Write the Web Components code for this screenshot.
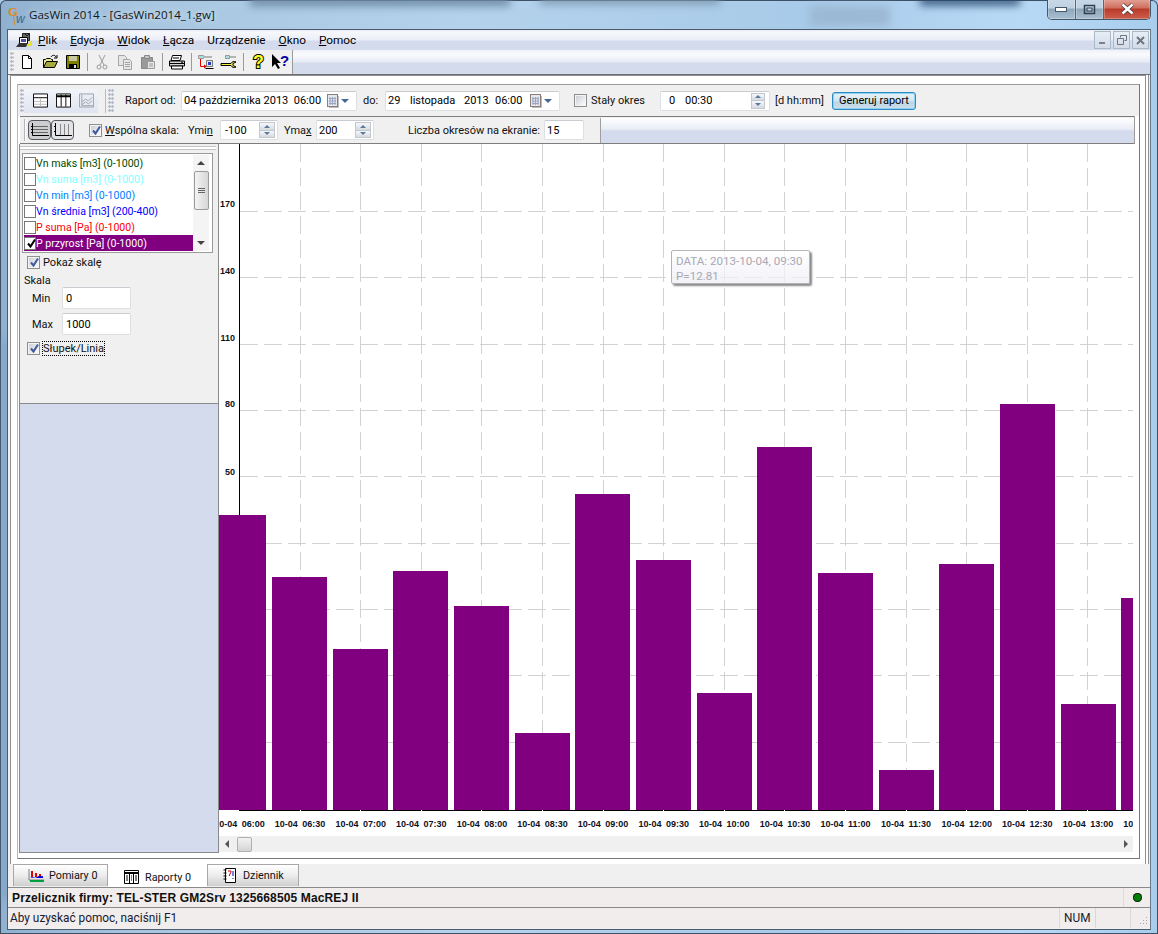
<!doctype html>
<html lang="pl">
<head>
<meta charset="utf-8">
<title>GasWin 2014</title>
<style>
  html, body { margin: 0; height: 100%; overflow: hidden; background: #a9cbe8; }
  body { font: 11px Roboto, "Liberation Sans", Arial, sans-serif; color: #111; }
</style>
</head>
<body>
<gw-window></gw-window>
<script>
// small helper, most elements here are only markup + styles
const plain = (name, css, html) => customElements.define(name, class extends HTMLElement {
  constructor() {
    super();
    this.attachShadow({ mode: "open" }).innerHTML = `<style>${css}</style>${html}`;
  }
});

const ICONS = {
  newfile: `<path d="M3.500 1.500h6l3 3v10h-9z" fill="#fff" stroke="#000"/><path d="M9.500 1.500v3h3" fill="none" stroke="#000"/>`,
  open: `<path d="M1.500 13.500v-8h2l1-1h4l1 1h1v2" fill="#e8e8a0" stroke="#000"/><path d="M1.500 13.500l3-6h11l-3 6z" fill="#a8a840" stroke="#000"/><path d="M9 3c1-2 4-2.500 5 0" fill="none" stroke="#000"/><path d="M15 1v3h-3" fill="none" stroke="#000"/>`,
  save: `<path d="M1.500 1.500h13v13h-13z" fill="#808000" stroke="#000"/><path d="M4 2h8v5h-8z" fill="#c8c8a0"/><path d="M4 10h8v5h-8z" fill="#000"/><path d="M9 11h2v3h-2z" fill="#ddd"/>`,
  cut: `<g fill="none" stroke="#9a9a9a"><path d="M5 1l5 10M11 1l-5 10"/><circle cx="5" cy="13" r="2"/><circle cx="11" cy="13" r="2"/></g>`,
  copy: `<g stroke="#a5a5a5" fill="#e6e6e6"><path d="M1.500 1.500h6l2 2v8h-8z"/><path d="M6.500 5.500h6l2 2v8h-8z"/></g><path d="M8 8.500h5M8 10.500h5M8 12.500h5" stroke="#a5a5a5"/>`,
  paste: `<path d="M1.500 3.500h11v11h-11z" fill="#9a9a9a" stroke="#888"/><path d="M4.500 1.500h5v3h-5z" fill="#c4c4c4" stroke="#888"/><path d="M7.500 7.500h7v7h-7z" fill="#e8e8e8" stroke="#999"/><path d="M9 10h4M9 12h4" stroke="#999"/>`,
  print: `<path d="M4.500 1.500h9l-1.500 5h-9z" fill="#fff" stroke="#000"/><path d="M1.500 7h15v5h-15z" fill="#d8d8d8" stroke="#000"/><path d="M2 9.500h14" stroke="#000"/><path d="M3.500 12h11v3h-11z" fill="#fff" stroke="#000"/><path d="M5 4h6M13 8.200h2" stroke="#000"/>`,
  link: `<path d="M1.500 1.500h5v3h-5z" fill="#a8e0e0" stroke="#999"/><path d="M6 3h9" stroke="#b4b4b4" stroke-width="2"/><path d="M3.500 5v7.500h4" fill="none" stroke="#e00000"/><path d="M7 10.500l3 2-3 2z" fill="#e00000"/><path d="M9.500 6.500h6v6h-6z" fill="#e4e4f0" stroke="#777"/><path d="M11 8h3v3h-3z" fill="#2040c0"/><path d="M8.500 14.500h8" stroke="#000"/>`,
  wrench: `<path d="M5.500 1.500h4v3h-4z" fill="#a8e0e0" stroke="#999"/><path d="M10 3h6" stroke="#b4b4b4" stroke-width="2"/><path d="M1 9.500h10c1-2 3-2.500 5-1.500l-3 1.500v2l3 1.500c-2 1-4 .5-5-1.500h-10z" fill="#f8f040" stroke="#000"/>`,
};
const icon = (name, w = 16, h = 16) =>
  `<svg width="${w}" height="${h}" viewBox="0 0 ${w > 16 ? 18 : 16} 16" aria-hidden="true">${ICONS[name]}</svg>`;

plain("gw-check", `
  :host { display: inline-flex; align-items: center; }
  i { display: block; box-sizing: border-box; width: 13px; height: 13px; border: 1px solid #8e8f8f; background: linear-gradient(135deg,#c8cbd2,#eef0f4 70%,#fff); box-shadow: inset 0 0 0 1px #f4f4f4; position: relative; }
  :host([list]) i { width: 12px; background: #fff; border-color: #777; box-shadow: none; }
  svg { position: absolute; left: 1px; top: 0; display: none; }
  :host([checked]) svg { display: block; }
  :host([checked]) path { stroke: #41599a; }
  :host([ink]) path { stroke: #000; }
`, `<i><svg width="11" height="11" viewBox="0 0 11 11"><path d="M2 5.500l2.500 3L9 1.500" fill="none" stroke-width="2"/></svg></i>`);

plain("gw-spinners", `
  :host { display: flex; flex-direction: column; width: 14px; height: 16px; border: 1px solid #c4c8ce; box-sizing: border-box; }
  b { flex: 1; background: linear-gradient(#f6f7f9,#d6dbe2); display: flex; align-items: center; justify-content: center; }
  b + b { border-top: 1px solid #c4c8ce; }
  i { width: 0; height: 0; border: 3px solid transparent; }
  b:first-of-type i { border-bottom: 3px solid #5878a0; border-top: 0; }
  b:last-of-type i { border-top: 3px solid #5878a0; border-bottom: 0; }
`, `<b><i></i></b><b><i></i></b>`);

plain("gw-field", `
  :host { display: flex; align-items: center; box-sizing: border-box; height: 20px; background: #fff; border: 1px solid #dcdfe3; border-top-color: #c9ccd1; border-radius: 2px; padding: 0 2px; white-space: pre; color: #000; }
  ::slotted(gw-spinners) { margin-left: auto; }
`, `<slot></slot>`);

plain("gw-calendar", `
  :host { display: flex; align-items: center; margin-left: auto; margin-right: 5px; }
  i { width: 0; height: 0; border: 4px solid transparent; border-top: 4px solid #44689a; border-bottom: 0; margin-left: 2px; }
`, `<svg width="12" height="14" viewBox="0 0 12 14" aria-hidden="true"><rect x=".5" y=".5" width="10" height="12" fill="#e4e7ee" stroke="#8c7f7a"/><path d="M3 3v8M5.500 3v8M8 3v8M2 4.500h7M2 7h7M2 9.500h7" stroke="#9aa5c0"/><path d="M11.500 2v11.500H2" stroke="#bbb" fill="none"/></svg><i></i>`);

plain("gw-grip", `
  :host { display: block; width: 4px; height: 24px; background-image: radial-gradient(circle at 1.500px 1.500px,#b4bccb 1.200px,transparent 1.500px); background-size: 3px 4px; }
`, ``);

plain("gw-title", `
  :host { display: flex; align-items: center; height: 29px; box-sizing: border-box; padding: 0 7px 0 8px; font: 11.600px "Open Sans", "Noto Sans", sans-serif; color: #101820; }
  span { text-shadow: 0 0 6px #e4f0fa; }
  .btns { margin-left: auto; display: flex; align-self: flex-start; height: 20px; margin-top: -1px; border: 1px solid #44586c; border-top: 0; border-radius: 0 0 5px 5px; overflow: hidden; background: #aebfd0; }
  .btns b { display: flex; align-items: center; justify-content: center; width: 27px; background: linear-gradient(#c8d8e8,#bfd2e3 45%,#8ea6bb 50%,#a9c0d2); border-right: 1px solid #55687a; box-shadow: inset 0 0 0 1px #ffffff40; }
  .btns b.x { width: 46px; border: 0; background: linear-gradient(#e4a49a,#cf6e5f 45%,#b93a2a 50%,#cc5f4c); }
`, `
  <svg width="21" height="22" viewBox="0 0 21 22" aria-hidden="true"><text x="0" y="12" font-family="Liberation Serif" font-size="13" font-weight="700" fill="#e08a10">G</text><path d="M6 10c-1 4 0 7 1 11" stroke="#e08a10" fill="none"/><text x="8" y="19" font-family="Liberation Sans" font-size="12" font-style="italic" fill="#3a6a90">w</text></svg>
  <span>GasWin 2014 - [GasWin2014_1.gw]</span>
  <div class="btns" aria-hidden="true">
    <b><svg width="13" height="7"><rect x=".5" y="1.500" width="11" height="4" fill="#fff" stroke="#44586c"/></svg></b>
    <b><svg width="13" height="11"><rect x="1.500" y="1.500" width="10" height="8" fill="none" stroke="#30404f" stroke-width="1.500"/><rect x="4" y="4" width="5" height="3" fill="#c8d8e8" stroke="#30404f"/></svg></b>
    <b class="x"><svg width="15" height="12" viewBox="0 0 15 12"><path d="M2.500 1.500l10 9M12.500 1.500l-10 9" stroke="#40302c" stroke-width="4"/><path d="M2.500 1.500l10 9M12.500 1.500l-10 9" stroke="#fff" stroke-width="2.600"/></svg></b>
  </div>`);

plain("gw-menu", `
  :host { display: flex; align-items: center; height: 20px; padding-left: 7px; background: linear-gradient(#e6eaf4,#f7f8fc 10%,#ebeef7 50%,#d4dbed 55%,#d4dbed); color: #000; font-size: 11.800px; }
  a { margin-right: 13px; }
  u { text-underline-offset: 1px; }
  svg { margin-right: 6px; }
  .mdi { margin-left: auto; display: flex; gap: 2px; padding-right: 1px; }
  .mdi b { box-sizing: border-box; width: 17px; height: 18px; border: 1px solid #a6bbc6; background: linear-gradient(#e8eef6,#d4dbe8); display: flex; align-items: center; justify-content: center; }
`, `
  <svg width="17" height="17" viewBox="0 0 17 17" aria-hidden="true"><path d="M7.500 1.500h7v7h-7z" fill="#666" stroke="#222"/><path d="M4.500 5.500h8v6h-8z" fill="#fff" stroke="#000"/><path d="M6 7h5v3h-5z" fill="#5050a0"/><path d="M1 15l3-4h9l-2 4z" fill="#333"/><path d="M12 13h4v-4" stroke="#e8e020" fill="none" stroke-width="2"/><path d="M10 2l2 2 3-3" stroke="#222" fill="none"/></svg>
  <a><u>P</u>lik</a><a><u>E</u>dycja</a><a><u>W</u>idok</a><a><u>Ł</u>ącza</a><a>Urządzenie</a><a><u>O</u>kno</a><a><u>P</u>omoc</a>
  <div class="mdi" aria-hidden="true">
    <b><svg style="margin:0" width="9" height="9"><path d="M1 7h6" stroke="#76828c" stroke-width="2"/></svg></b>
    <b><svg style="margin:0" width="10" height="10"><path d="M3.500 2.500v-2h6v5h-2M.5 3.500h6v6h-6z" fill="none" stroke="#6a7680"/></svg></b>
    <b><svg style="margin:0" width="9" height="9"><path d="M1 1l7 7M8 1l-7 7" stroke="#6a7680" stroke-width="2"/></svg></b>
  </div>`);

plain("gw-toolbar", `
  :host { display: flex; height: 25px; box-sizing: border-box; border-bottom: 1px solid #6b6f76; background: linear-gradient(#eff2f9,#f9fafd 20%,#e6eaf5 50%,#d4dbed 55%,#d4dbed); }
  .bar { display: flex; align-items: center; width: 285px; box-sizing: border-box; background: #f0f0f0; border-right: 1px solid #9a9a9a; }
  gw-grip { width: 4px; height: 20px; margin: 0 0 0 2px; }
  b { width: 23px; height: 20px; display: flex; align-items: center; justify-content: center; font-weight: 400; }
  b:first-of-type { margin-left: 1px; }
  s { width: 1px; height: 18px; background: #9b9b9b; margin: 0 2px 0 3px; }
  text { font: 700 18px "Liberation Sans", sans-serif; paint-order: stroke; }
`, `
  <div class="bar">
    <gw-grip></gw-grip>
    <b>${icon("newfile")}</b><b>${icon("open")}</b><b>${icon("save")}</b><s></s>
    <b>${icon("cut")}</b><b>${icon("copy")}</b><b>${icon("paste")}</b><s></s>
    <b>${icon("print", 18)}</b><s></s>
    <b>${icon("link", 18)}</b><b>${icon("wrench", 18)}</b><s></s>
    <b><svg width="14" height="18" viewBox="0 0 14 18" aria-hidden="true"><text x="2" y="15" fill="#ffff20" stroke="#000" stroke-width="2">?</text></svg></b>
    <b><svg width="20" height="18" viewBox="0 0 20 18" aria-hidden="true"><path d="M1 1v13l3-3 3 5 2-1-3-5h4z" fill="#000"/><text x="9" y="13" style="font-size:15px" fill="#0000a0">?</text></svg></b>
  </div>`);

plain("gw-report-bar", `
  :host { display: flex; align-items: center; height: 31px; box-sizing: border-box; background: #f0f0f0; padding-left: 2px; white-space: nowrap; }
  .views { display: flex; align-items: center; width: 74px; height: 24px; background: linear-gradient(#f2f4fa,#dfe4f1); box-sizing: border-box; padding-left: 9px; gap: 8px; }
  .sep { width: 1px; height: 24px; background: #bbb; margin: 0 2px 0 7px; }
  .sep + gw-grip { width: 6px; }
  .lab { display: inline-block; }
  button { box-sizing: border-box; width: 84px; height: 18px; padding: 0; font: inherit; color: #000; border: 1px solid #2c8ac4; border-radius: 3px; background: linear-gradient(#e6f2f9,#d4e6f0 50%,#b9d4e4 55%,#cfe0ea); box-shadow: inset 0 0 0 1px #8fd0f0; }
`, `
  <gw-grip></gw-grip>
  <div class="views">
    <svg width="15" height="15" viewBox="0 0 16 15" aria-hidden="true"><path d="M.5.500h15v14H.5z" fill="#fff" stroke="#000"/><path d="M1 4.500h14" stroke="#000"/><path d="M1 8.500h14M1 11.500h14M8 5v9" stroke="#bbb"/></svg>
    <svg width="15" height="15" viewBox="0 0 16 15" aria-hidden="true"><path d="M.5.500h15v14H.5z" fill="#fff" stroke="#000"/><path d="M1 2h14v2H1z" fill="#000"/><path d="M5.500 1v13M10.500 1v13" stroke="#000"/></svg>
    <svg width="15" height="15" viewBox="0 0 16 15" aria-hidden="true"><path d="M.5.500h15v14H.5z" fill="#e8ecf4" stroke="#9da2aa"/><path d="M3 1v12h12M3 9l4-3 3 2 4-4M3 12l4-3 3 2 4-3" fill="none" stroke="#9da2aa"/></svg>
  </div>
  <div class="sep"></div><gw-grip></gw-grip>
  <span class="lab" style="margin-left:11px;width:56px">Raport od:</span>
  <gw-field style="width:176px"><span>04 października 2013  06:00</span><gw-calendar></gw-calendar></gw-field>
  <span class="lab" style="margin-left:6px;width:22px">do:</span>
  <gw-field style="width:175px"><span style="width:22px">29</span><span style="width:54px">listopada</span><span style="width:31px">2013</span><span>06:00</span><gw-calendar></gw-calendar></gw-field>
  <gw-check style="margin-left:14px"></gw-check>
  <span class="lab" style="margin-left:4px;width:69px">Stały okres</span>
  <gw-field style="width:110px"><span style="margin-left:6px;width:16px">0</span><span>00:30</span><gw-spinners style="margin-right:2px"></gw-spinners></gw-field>
  <span class="lab" style="margin-left:5px;width:57px">[d hh:mm]</span>
  <button type="button">Generuj raport</button>`);

plain("gw-scale-bar", `
  :host { display: flex; align-items: center; height: 28px; box-sizing: border-box; margin: 0 5px 0 2px; background: #f0f0f0; border-top: 1px solid #7d7d7d; border-bottom: 1px solid #7d7d7d; box-shadow: 1px 0 0 #9a9a9a; white-space: nowrap; }
  .rule { width: 1px; height: 22px; background: #b5b5b5; box-shadow: 1px 0 0 #fff; margin-left: 4px; }
  .toggle { display: flex; margin-left: 3px; }
  .toggle b { display: flex; align-items: center; justify-content: center; box-sizing: border-box; width: 23px; height: 20px; border: 1px solid #55595e; border-radius: 4px; background: #ccced2; }
  .toggle b + b { background: #e2e4e8; }
  .blue { margin-left: auto; width: 533px; height: 25px; border-left: 1px solid #a0a0a0; background: linear-gradient(#fff,#e8ecf6 45%,#d3dbed 52%,#d3dbed); }
  u { text-underline-offset: 1px; }
  gw-field { height: 20px; }
  gw-spinners { width: 16px; }
`, `
  <div class="rule"></div>
  <div class="toggle">
    <b><svg width="19" height="14" viewBox="0 0 19 14" aria-hidden="true"><path d="M2.500 0v12.500H19" fill="none" stroke="#000"/><path d="M3 3.500h15M3 6.500h15M3 9.500h15" stroke="#666"/><path d="M1 3.500h2M1 6.500h2M1 9.500h2" stroke="#000"/></svg></b>
    <b><svg width="19" height="14" viewBox="0 0 19 14" aria-hidden="true"><path d="M2.500 0v12.500H19" fill="none" stroke="#000"/><path d="M7.500 1v11M11.500 1v11M15.500 1v11" stroke="#888"/><path d="M1 3.500h2M1 8.500h2" stroke="#000"/></svg></b>
  </div>
  <gw-check checked style="margin-left:15px"></gw-check>
  <span style="margin-left:3px;width:83px"><u>W</u>spólna skala:</span>
  <span style="width:32px">Ymi<u>n</u></span>
  <gw-field style="width:58px;padding-left:4px">-100<gw-spinners></gw-spinners></gw-field>
  <span style="margin-left:6px;width:32px">Yma<u>x</u></span>
  <gw-field style="width:58px">200<gw-spinners></gw-spinners></gw-field>
  <span style="margin-left:34px;width:136px">Liczba okresów na ekranie:</span>
  <gw-field style="width:40px">15</gw-field>
  <div class="blue"></div>`);

class GwListItem extends HTMLElement {
  constructor() {
    super();
    const tpl = document.createElement("template");
    tpl.innerHTML = `<style>
      :host { display: flex; align-items: center; height: 16px; white-space: nowrap; color: var(--c); font-size: 10.600px; }
      :host([selected]) { background: #800080; color: #fff; }
    </style><gw-check list></gw-check><span><slot></slot></span>`;
    this.attachShadow({ mode: "open" }).appendChild(tpl.content.cloneNode(true));
  }
  connectedCallback() {
    this.style.setProperty("--c", this.getAttribute("color") || "#000");
    if (this.hasAttribute("selected")) {
      const c = this.shadowRoot.querySelector("gw-check");
      c.setAttribute("checked", "");
      c.setAttribute("ink", "");
    }
  }
}
customElements.define("gw-list-item", GwListItem);

plain("gw-side-panel", `
  :host { display: flex; flex-direction: column; width: 200px; box-sizing: border-box; border-left: 1px solid #8a8a8a; border-right: 1px solid #8a8a8a; border-bottom: 1px solid #8a8a8a; background: #d3dbed; }
  .top { height: 260px; box-sizing: border-box; background: #f0f0f0; border-bottom: 1px solid #8a8a8a; padding-top: 2px; }
  .line { height: 2px; margin-right: 2px; background: #fff; border-top: 1px solid #c4c4c4; border-bottom: 1px solid #c4c4c4; }
  .list { display: flex; box-sizing: border-box; width: 191px; height: 100px; margin: 3px 0 0 2px; border: 1px solid #9a9a9a; background: #fff; padding: 1px 3px 1px 0; }
  .rows { flex: 1; display: flex; flex-direction: column; justify-content: flex-end; padding-left: 1px; }
  .sb { width: 16px; display: flex; flex-direction: column; align-items: center; background: #f4f4f4; }
  .sb i { width: 0; height: 0; border: 4px solid transparent; margin-top: 6px; border-bottom: 4px solid #444; border-top: 0; }
  .sb i.d { margin-top: auto; margin-bottom: 6px; border-top: 4px solid #444; border-bottom: 0; }
  .sb b { box-sizing: border-box; width: 15px; height: 39px; margin-top: 6px; border: 1px solid #9b9b9b; border-radius: 2px; background: linear-gradient(90deg,#f4f4f4,#d6d6d6); display: flex; flex-direction: column; justify-content: center; gap: 1px; padding: 0 3px; }
  .sb b s { height: 1px; background: #666; }
  .row { display: flex; align-items: center; }
  .val { display: flex; align-items: center; }
  .val span { width: 30px; margin-left: 12px; }
  gw-field { width: 69px; height: 22px; padding-left: 3px; }
  .focus { outline: 1px dotted #000; margin-left: 3px; }
`, `
  <div class="top">
    <div class="line"></div>
    <div class="list">
      <div class="rows">
        <gw-list-item color="#004d00">Vn maks [m3] (0-1000)</gw-list-item>
        <gw-list-item color="#80ffff">Vn suma [m3] (0-1000)</gw-list-item>
        <gw-list-item color="#0080ff">Vn min [m3] (0-1000)</gw-list-item>
        <gw-list-item color="#0000ff">Vn średnia [m3] (200-400)</gw-list-item>
        <gw-list-item color="#ff0000">P suma [Pa] (0-1000)</gw-list-item>
        <gw-list-item selected>P przyrost [Pa] (0-1000)</gw-list-item>
      </div>
      <div class="sb" aria-hidden="true"><i></i><b><s></s><s></s><s></s></b><i class="d"></i></div>
    </div>
    <div class="row" style="margin:2px 0 0 7px;height:14px"><gw-check checked></gw-check><span style="margin-left:3px">Pokaż skalę</span></div>
    <div style="margin:5px 0 0 4px;height:14px">Skala</div>
    <div class="val" style="margin-top:-1px"><span>Min</span><gw-field>0</gw-field></div>
    <div class="val" style="margin-top:4px"><span>Max</span><gw-field>1000</gw-field></div>
    <div class="row" style="margin:6px 0 0 7px;height:14px"><gw-check checked></gw-check><span class="focus">Słupek/Linia</span></div>
  </div>`);

class GwChart extends HTMLElement {
  static tops = [515, 577, 649, 571, 606, 733, 494, 560, 693, 447, 573, 770, 564, 404, 704, 598];
  static lefts = [219, 272, 333, 393, 454, 515, 575, 636, 697, 757, 818, 879, 939, 1000, 1061, 1121];
  static times = ["06:00","06:30","07:00","07:30","08:00","08:30","09:00","09:30","10:00","10:30","11:00","11:30","12:00","12:30","13:00","13:30"];

  constructor() {
    super();
    const W = 914, H = 692, dx = 219, dy = 144, base = 810 - dy;
    let grid = "", bars = "", labels = "", ticks = "";
    for (let i = 0; i < 9; i++) {
      const y = 211 + i * 66.35 - dy;
      grid += `<path d="M21 ${y.toFixed(0)}.5H${W}"/>`;
    }
    for (let i = 1; i < 15; i++) {
      const x = 239 + i * 60.6 - dx;
      grid += `<path d="M${x.toFixed(0)}.5 0V${base}"/>`;
      ticks += `<path d="M${x.toFixed(0)}.5 ${base}v3"/>`;
    }
    GwChart.tops.forEach((top, i) => {
      const left = GwChart.lefts[i] - dx;
      const right = Math.min(i === 0 ? 47 : left + 55, W);
      bars += `<rect x="${left}" y="${top - dy}" width="${right - left}" height="${base - top + dy}"/>`;
      labels += `<text x="${20.5 + i * 60.6}" y="683" text-anchor="middle">10-04 ${GwChart.times[i]}</text>`;
    });
    const scale = [["170", 63], ["140", 130], ["110", 197], ["80", 263], ["50", 331]]
      .map(([t, y]) => `<text x="16" y="${y}" text-anchor="end">${t}</text>`).join("");
    this.attachShadow({ mode: "open" }).innerHTML = `
      <style>
        :host { display: flex; flex-direction: column; width: 914px; position: relative; background: #fff; }
        svg { display: block; }
        .grid path { stroke: #d2d2d2; stroke-dasharray: 18 6; fill: none; }
        .bars rect { fill: #800080; }
        text { font: 700 9px "Liberation Sans", Arial, sans-serif; word-spacing: 2px; fill: #10101c; }
        .tip { position: absolute; left: 452px; top: 106px; width: 139px; height: 34px; box-sizing: border-box; padding: 3px 4px; border: 1px solid #b4b4b4; border-radius: 2px; color: #a8a8b4; font-size: 11.600px; line-height: 15px; background: linear-gradient(#ffffffc0,#eeeef6c0); box-shadow: 2px 2px 2px #8a8a8a; white-space: nowrap; }
        .sb { display: flex; align-items: center; height: 16px; background: #f0f0f0; }
        .sb i { width: 0; height: 0; border: 4px solid transparent; }
        .sb i.l { border-right: 4px solid #555; border-left: 0; margin-left: 6px; }
        .sb i.r { border-left: 4px solid #555; border-right: 0; margin-left: auto; margin-right: 5px; }
        .sb b { box-sizing: border-box; width: 15px; height: 15px; margin-left: 8px; border: 1px solid #b0b0b0; border-radius: 2px; background: linear-gradient(#f2f2f2,#d4d4d4); }
      </style>
      <svg width="${W}" height="${H}" viewBox="0 0 ${W} ${H}">
        <g class="grid">${grid}</g>
        <path d="M20.500 0V${base}" stroke="#000" fill="none"/>
        <g class="bars">${bars}</g>
        <path d="M20 ${base}.5H${W}" stroke="#000" fill="none"/>
        <g stroke="#fff">${ticks}</g>
        ${scale}
        ${labels}
      </svg>
      <div class="sb"><i class="l"></i><b></b><i class="r"></i></div>
      <div class="tip">DATA: 2013-10-04, 09:30<br>P=12.81</div>`;
  }
}
customElements.define("gw-chart", GwChart);

plain("gw-tabs", `
  :host { display: flex; align-items: flex-end; height: 23px; box-sizing: border-box; padding-left: 5px; background: #f0f0f0; font-size: 10.800px; }
  a { display: flex; align-items: center; gap: 6px; box-sizing: border-box; height: 22px; margin-bottom: 1px; border: 1px solid #a8a8a8; border-bottom: 0; background: linear-gradient(#fff,#ececec 50%,#cfcfcf); padding-left: 15px; }
  a.on { height: 23px; margin-bottom: 0; background: #fff; border-color: #fff; padding-top: 2px; }
`, `
  <a style="width:95px;padding-left:14px;gap:5px"><svg width="16" height="14" viewBox="0 0 16 14" aria-hidden="true"><path d="M1 0v11h15" stroke="#808080" fill="none"/><path d="M3 8V2h2v6zM7 8V4h2v4zM11 8V5h2v3z" fill="#e00000"/><path d="M2 9c3-2 5 1 7-1s4 0 6-1v2H2z" fill="#0000e0"/><path d="M2 11h14v2H2z" fill="#00a040"/></svg>Pomiary 0</a>
  <a class="on" style="width:99px"><svg width="15" height="14" viewBox="0 0 15 14" aria-hidden="true"><path d="M.5.500h14v13H.5z" fill="#fff" stroke="#000"/><path d="M1 2h13v2H1zM5 4h1v9H5zM9 4h1v9H9z" fill="#000"/><path d="M2 6h2M2 8h2M2 10h2M7 6h1M7 8h1M7 10h1M11 6h2M11 8h2M11 10h2" stroke="#000"/></svg>Raporty 0</a>
  <a style="width:92px"><svg width="14" height="15" viewBox="0 0 14 15" aria-hidden="true"><path d="M2.500.500h10v14h-10z" fill="#fff" stroke="#000"/><path d="M.5 2h3M.5 5h3M.5 8h3M.5 11h3" stroke="#000"/><path d="M5 3h3v1L6.500 7v1" stroke="#d00000" fill="none"/><path d="M10 3v5M10 10v1" stroke="#0000c0"/></svg>Dziennik</a>`);

plain("gw-info", `
  :host { display: flex; align-items: center; height: 20px; box-sizing: border-box; border-top: 1px solid #8a8a8a; background: #f0edec; font: 700 12px "Liberation Sans", Arial, sans-serif; padding-left: 4px; letter-spacing: .13px; white-space: nowrap; }
  b { margin-left: auto; box-sizing: border-box; width: 27px; height: 100%; border-left: 1px solid #ddd; display: flex; align-items: center; justify-content: center; }
  i { width: 9px; height: 9px; border-radius: 50%; background: #008000; box-shadow: 0 0 0 1px #222 inset; }
`, `Przelicznik firmy: TEL-STER GM2Srv 1325668505 MacREJ II<b><i></i></b>`);

plain("gw-status", `
  :host { display: flex; align-items: center; height: 21px; box-sizing: border-box; border-top: 1px solid #8a8a8a; background: #f0edec; padding-left: 2px; white-space: nowrap; color: #1a1a30; font-size: 11.850px; }
  b { font-weight: 400; height: 100%; box-sizing: border-box; border-left: 1px solid #d8d8d8; display: flex; align-items: center; padding-left: 4px; }
  .num { margin-left: auto; width: 36px; }
  .cap { width: 35px; }
  .end { width: 20px; position: relative; }
  svg { position: absolute; right: 2px; bottom: 2px; }
`, `Aby uzyskać pomoc, naciśnij F1<b class="num">NUM</b><b class="cap"></b><b class="end"><svg width="10" height="10" aria-hidden="true"><path d="M8 1h1v1H8zM5 4h1v1H5zM8 4h1v1H8zM2 7h1v1H2zM5 7h1v1H5zM8 7h1v1H8z" fill="#a8a8a8"/></svg></b>`);

plain("gw-client", `
  :host { display: block; flex: 1; box-sizing: border-box; margin: 0 7px 4px 7px; border: 1px solid #4c5c6c; border-right-color: #6a7a8a; background: #f0f0f0; }
  .outer { height: 789px; box-sizing: border-box; margin: 0 4px 0 2px; border: 1px solid #8f8f8f; border-bottom: 0; background: #fff; padding: 8px 5px 0 6px; box-shadow: 2px 0 0 #fff, 3px 0 0 #8f8f8f; }
  .inner { height: 775px; box-sizing: border-box; border-top: 1px solid #9a9a9a; border-left: 1px solid #b8b8b8; border-bottom: 1px solid #777; border-right: 1px solid #777; background: #fff; }
  .main { display: flex; height: 709px; margin-left: 1px; }
`, `
  <gw-menu></gw-menu>
  <gw-toolbar></gw-toolbar>
  <div class="outer">
    <div class="inner">
      <gw-report-bar></gw-report-bar>
      <gw-scale-bar></gw-scale-bar>
      <div class="main">
        <gw-side-panel></gw-side-panel>
        <gw-chart></gw-chart>
      </div>
    </div>
  </div>
  <gw-tabs></gw-tabs>
  <gw-info></gw-info>
  <gw-status></gw-status>`);

plain("gw-window", `
  :host { display: flex; flex-direction: column; width: 1158px; height: 934px; box-sizing: border-box; position: relative; overflow: hidden; background: linear-gradient(90deg,#8fb0cf,#a8c6e0 12%,#b4d2ec 40%,#a8cbe9 70%,#b8d9f6 88%,#a8cdec); box-shadow: inset 0 0 0 1px #3d5066; border-radius: 6px 6px 0 0; }
  .blur { position: absolute; filter: blur(4px); pointer-events: none; }
  gw-title { position: relative; }
  gw-client { position: relative; }
`, `
  <div class="blur" style="left:250px;top:-4px;width:260px;height:10px;background:#6d8aa6"></div>
  <div class="blur" style="left:540px;top:-4px;width:180px;height:8px;background:#7c96ad"></div>
  <div class="blur" style="left:920px;top:-3px;width:100px;height:8px;background:#2a4a70"></div>
  <div class="blur" style="left:810px;top:6px;width:80px;height:20px;background:#9bb8d4"></div>
  <div class="blur" style="left:4px;top:340px;width:3px;height:560px;background:#6c94bc"></div>
  <gw-title></gw-title>
  <gw-client></gw-client>`);
</script>
</body>
</html>
